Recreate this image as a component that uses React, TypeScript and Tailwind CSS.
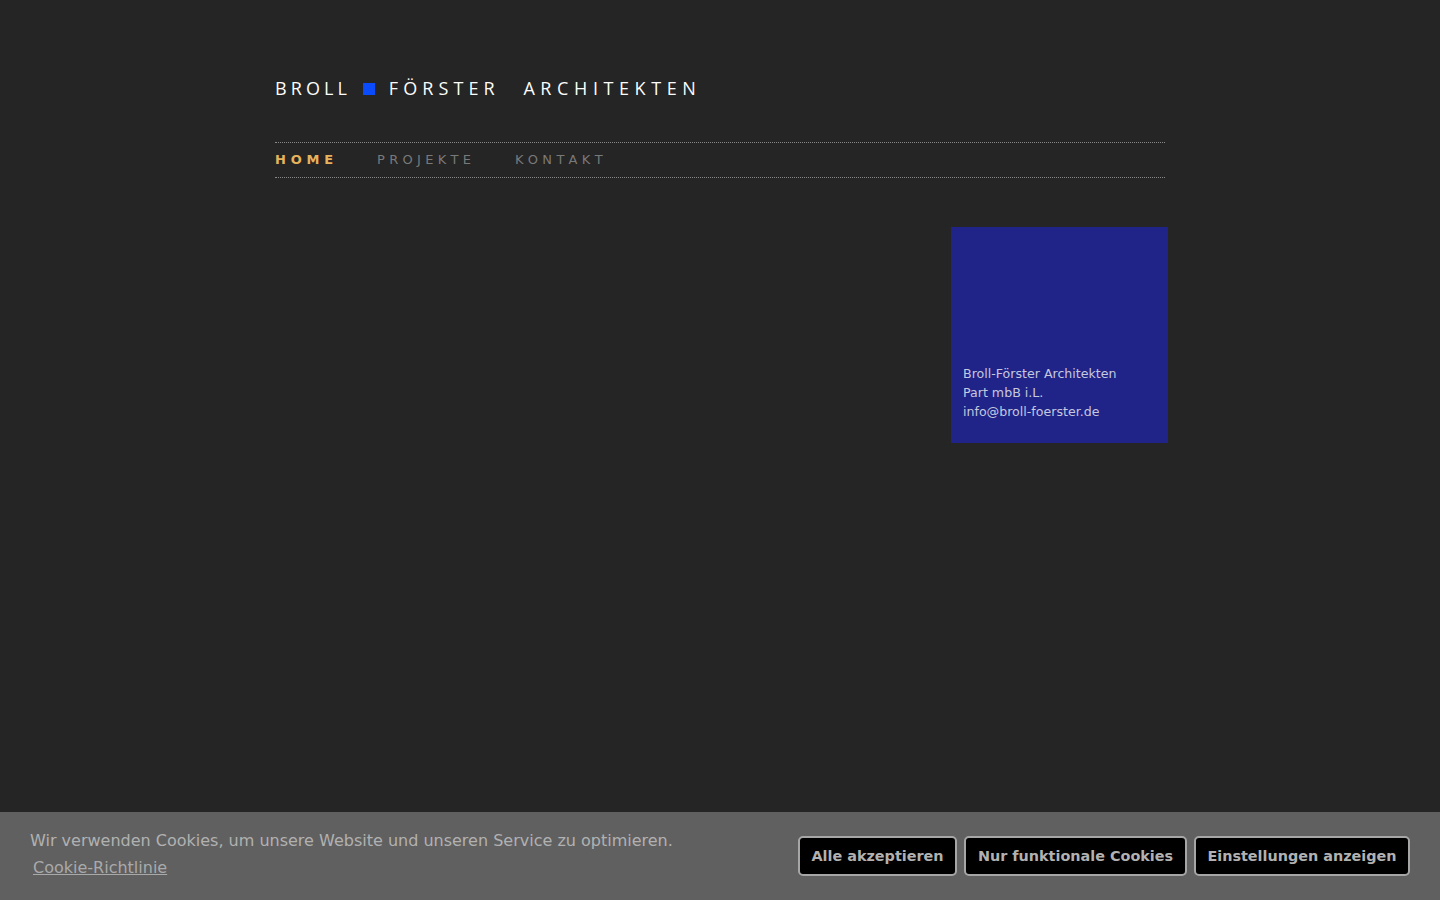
export default function App() {
  const dv = "font-['DejaVu_Sans',sans-serif]";
  return (
    <div className={`min-h-[900px] bg-[#252525] ${dv}`}>
      <div className="mx-auto w-[890px] pt-[76px] opacity-[0.99]">
        <div className="flex h-[26px] items-center font-['Open_Sans',sans-serif] text-[18px] font-medium text-white">
          <span className="self-start leading-[24px] tracking-[4.1px]">BROLL</span>
          <span className="ml-[11.8px] h-[12px] w-[12px] bg-[#0a4dff]" />
          <span className="ml-[14px] self-start leading-[24px] tracking-[5.08px]">FÖRSTER</span>
          <span className="ml-[23.7px] self-start leading-[24px] tracking-[5.6px]">ARCHITEKTEN</span>
        </div>
        <nav className="mt-[40px] flex h-[36px] items-center border-y border-dotted border-y-[#8a8a8a] text-[13px] [font-kerning:none]">
          <a className="w-[102px] font-bold tracking-[4.8px] text-[#e9b55e]">HOME</a>
          <a className="w-[138px] tracking-[4.3px] text-[#7a7a7a]">PROJEKTE</a>
          <a className="tracking-[4.3px] text-[#7a7a7a]">KONTAKT</a>
        </nav>
        <div className="mt-[49px] flex justify-end">
          <div className="-mr-[3px] flex h-[216px] w-[217px] flex-col justify-end bg-[#20248a] px-[12px] pb-[22px] text-[12.6px] leading-[19px] text-[#c8cae0]">
            <div>Broll-Förster Architekten</div>
            <div>Part mbB i.L.</div>
            <div>info@broll-foerster.de</div>
          </div>
        </div>
      </div>
      <div className="fixed bottom-0 left-0 right-0 flex h-[88px] items-center justify-between bg-[#626262] pl-[30px] pr-[30px] text-[16px] leading-[27px] text-[#b4b4b4] opacity-[0.99]">
        <div className="-mt-[4px]">
          <div>Wir verwenden Cookies, um unsere Website und unseren Service zu optimieren.</div>
          <a className="ml-[3px] text-[#acacac] underline">Cookie-Richtlinie</a>
        </div>
        <div className="flex gap-[7px]">
          <button className="h-[40px] w-[159px] rounded-[5px] border-2 border-[#a8a8a8] bg-black text-[14.4px] font-bold text-[#b4b4b4]">Alle akzeptieren</button>
          <button className="h-[40px] w-[223px] rounded-[5px] border-2 border-[#a8a8a8] bg-black text-[14.4px] font-bold text-[#b4b4b4]">Nur funktionale Cookies</button>
          <button className="h-[40px] w-[216px] rounded-[5px] border-2 border-[#a8a8a8] bg-black text-[14.4px] font-bold text-[#b4b4b4]">Einstellungen anzeigen</button>
        </div>
      </div>
    </div>
  );
}
